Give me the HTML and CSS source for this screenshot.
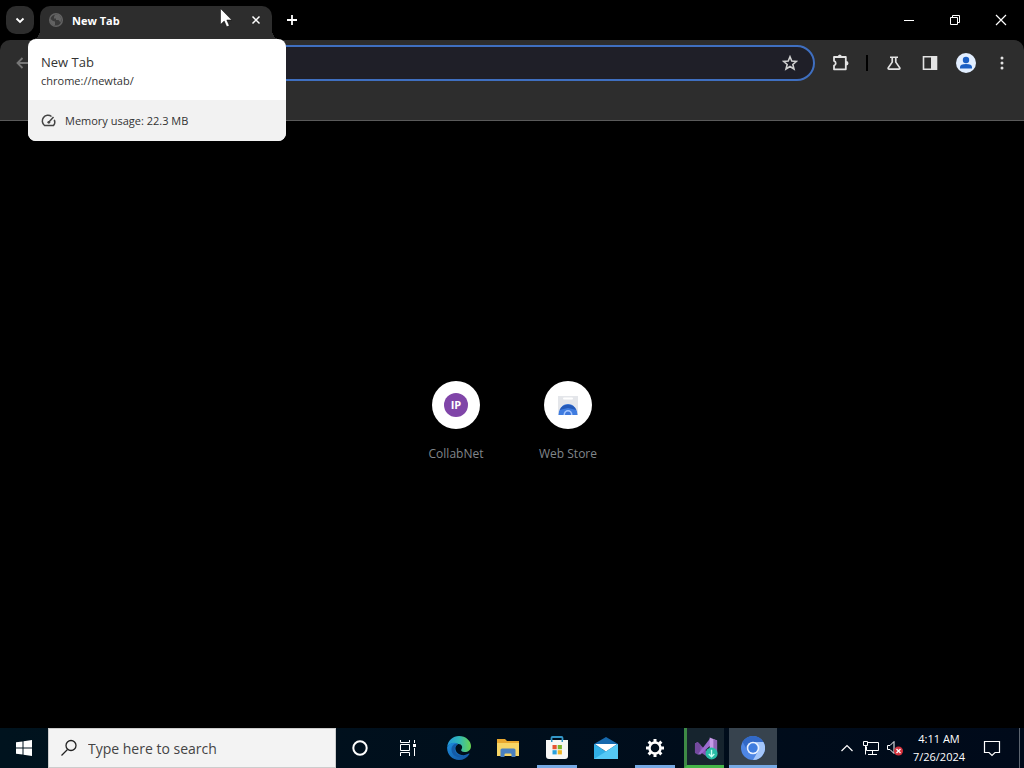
FILE: index.html
```html
<!DOCTYPE html>
<html lang="en">
<head>
    <meta charset="UTF-8">
    <meta name="viewport" content="width=device-width, initial-scale=1.0">
    <title>New Tab</title>
    <link rel="stylesheet" href="styles.css">
</head>
<body>
<!-- Tab strip -->
<header class="tab-strip">
    <button class="tab-search" aria-label="Search tabs">
        <svg width="16" height="16" viewBox="0 0 16 16"><path d="M4.500 6.500 8 10l3.500-3.500" fill="none" stroke="#fff" stroke-width="1.800"/></svg>
    </button>
    <div class="tab">
        <svg width="16" height="16" viewBox="0 0 16 16">
            <circle cx="8" cy="8" r="6.300" fill="#3a3a3a" stroke="#626262" stroke-width="1.500"/>
            <path d="M2 6.500 5 9l2 .5V13l-1.500.5Q2 11.500 2 6.500zM7 2.500l4 .5 2.500 3.500-1 4-2-2.500H8V6.500H6V5z" fill="#626262"/>
        </svg>
        <span class="tab-title">New Tab</span>
        <button class="tab-close" aria-label="Close tab">
            <svg width="16" height="16" viewBox="0 0 16 16"><path d="M4.500 4.500l7 7M11.500 4.500l-7 7" stroke="#fff" stroke-width="1.500"/></svg>
        </button>
    </div>
    <button class="new-tab" aria-label="New tab">
        <svg width="16" height="16" viewBox="0 0 16 16"><path d="M8 3v10M3 8h10" stroke="#fff" stroke-width="1.800"/></svg>
    </button>
    <div class="window-controls">
        <button aria-label="Minimize"><svg width="12" height="12" viewBox="0 0 12 12"><path d="M1 6.500h10" stroke="#fff"/></svg></button>
        <button aria-label="Restore"><svg width="12" height="12" viewBox="0 0 12 12"><path d="M1.500 3.500h7v7h-7zM3.500 3.500v-2h7v7h-2" fill="none" stroke="#fff"/></svg></button>
        <button aria-label="Close"><svg width="12" height="12" viewBox="0 0 12 12"><path d="M1 1l10 10M11 1 1 11" stroke="#fff" stroke-width="1.200"/></svg></button>
    </div>
</header>

<!-- Toolbar and bookmarks bar -->
<div class="toolbar">
    <div class="toolbar-row">
        <button class="tool" aria-label="Back">
            <svg width="16" height="16" viewBox="0 0 16 16"><path d="M14 8H4M8.500 3l-5 5 5 5" fill="none" stroke="#777" stroke-width="1.800"/></svg>
        </button>
        <button class="tool" aria-label="Forward">
            <svg width="16" height="16" viewBox="0 0 16 16"><path d="M2 8h10M7.500 3l5 5-5 5" fill="none" stroke="#777" stroke-width="1.800"/></svg>
        </button>
        <button class="tool" aria-label="Reload">
            <svg width="16" height="16" viewBox="0 0 16 16"><path d="M13 8a5 5 0 1 1-1.500-3.500M13 2v4H9" fill="none" stroke="#ddd" stroke-width="1.600"/></svg>
        </button>
        <div class="address-bar">
            <input type="text" aria-label="Address and search bar">
            <button class="star" aria-label="Bookmark this tab">
                <svg width="16" height="16" viewBox="0 0 18 18"><path d="M9 2l2 4.800 5.200.4-4 3.400 1.300 5.100L9 13l-4.500 2.700 1.300-5.100-4-3.400L7 6.800z" fill="none" stroke="#d0d0d0" stroke-width="1.800"/></svg>
            </button>
        </div>
        <button class="tool" aria-label="Extensions">
            <svg width="20" height="20" viewBox="0 0 20 20"><path d="M4 4h11.800v12.300H4v-3.600c2.300-.6 2.300-4.200 0-4.800z" fill="none" stroke="#e3e3e3" stroke-width="1.800" stroke-linejoin="round"/><path d="M7.800 4a2 2.500 0 0 1 4 0zM16 8a2.500 2.200 0 0 1 0 4.400z" fill="#e3e3e3"/></svg>
        </button>
        <span class="divider"></span>
        <button class="tool" aria-label="Experiments">
            <svg width="16" height="16" viewBox="0 0 18 18"><path d="M4.500 2.500h9M7 3v5L2.500 14.500q-.5 1.300 1 1.300h11q1.500 0 1-1.300L11 8V3" fill="none" stroke="#e3e3e3" stroke-width="1.900"/></svg>
        </button>
        <button class="tool" aria-label="Side panel">
            <svg width="16" height="16" viewBox="0 0 16 16"><path d="M1.500 1.800h13v12.400h-13z" fill="none" stroke="#e3e3e3" stroke-width="1.600"/><path d="M9 1.500h5.500v13H9z" fill="#e3e3e3"/></svg>
        </button>
        <button class="tool" aria-label="Profile">
            <svg width="20" height="20" viewBox="0 0 20 20"><circle cx="10" cy="10" r="10" fill="#e2eeff"/><circle cx="10" cy="7" r="3.200" fill="#1b5fc4"/><path d="M4 15.500V14q0-3 6-3t6 3v1.500z" fill="#1b5fc4"/></svg>
        </button>
        <button class="tool" aria-label="Menu">
            <svg width="16" height="16" viewBox="0 0 16 16" fill="#e3e3e3"><circle cx="8" cy="3" r="1.500"/><circle cx="8" cy="8" r="1.500"/><circle cx="8" cy="13" r="1.500"/></svg>
        </button>
    </div>
    <div class="bookmarks-bar"></div>
</div>

<!-- New tab page -->
<main class="page">
    <a class="shortcut" href="#">
        <span class="shortcut-icon"><span class="badge-ip">IP</span></span>
        <span>CollabNet</span>
    </a>
    <a class="shortcut" href="#">
        <span class="shortcut-icon">
            <svg width="24" height="24" viewBox="0 0 24 24">
                <path d="M2 3h20v19H2z" fill="#e4e6ea"/>
                <path d="M8 5.500h8" stroke="#fff" stroke-width="2" stroke-linecap="round"/>
                <path d="M2.500 22a9.500 11 0 0 1 19 0z" fill="#3f7ce0"/>
                <path d="M3.500 17A9.500 9.500 0 0 1 20.500 17L12 15z" fill="#2459b8"/>
                <path d="M7.500 22a4.500 5 0 0 1 9 0z" fill="#a8c8ff"/>
                <path d="M9 22a3 3.500 0 0 1 6 0z" fill="#3e78dc"/>
            </svg>
        </span>
        <span>Web Store</span>
    </a>
</main>

<!-- Windows taskbar -->
<footer class="taskbar">
    <button class="task" aria-label="Start">
        <svg width="16" height="16" viewBox="0 0 16 16" fill="#fff"><path d="M0 2.300 6.500 1.400V7.500H0zM7.500 1.200 16 0v7.500H7.500zM0 8.500h6.500v6.100L0 13.700zM7.500 8.500H16V16l-8.500-1.200z"/></svg>
    </button>
    <label class="search">
        <svg width="18" height="18" viewBox="0 0 18 18"><circle cx="11" cy="6.500" r="5" fill="none" stroke="#222" stroke-width="1.300"/><path d="M7.500 10.500 1.500 16.500" stroke="#222" stroke-width="1.300"/></svg>
        <input type="text" placeholder="Type here to search" aria-label="Type here to search">
    </label>
    <button class="task" aria-label="Cortana">
        <svg width="16" height="16" viewBox="0 0 16 16"><circle cx="8" cy="8" r="6.700" fill="none" stroke="#fff" stroke-width="2"/></svg>
    </button>
    <button class="task" aria-label="Task view">
        <svg width="18" height="18" viewBox="0 0 18 18" fill="none" stroke="#fff"><path d="M1.500 1v2.500h9V1M1.500 5.500h9v6h-9zM1.500 17v-3.500h9V17M15.500 1v3M15.500 9v8"/><path d="M14 5h3v3h-3z" fill="#fff" stroke="none"/></svg>
    </button>
    <nav class="apps">
        <button class="task" aria-label="Microsoft Edge">
            <svg width="24" height="24" viewBox="0 0 24 24">
                <defs>
                    <linearGradient id="edge-top" x1="0" x2="1"><stop offset="0" stop-color="#2498dc"/><stop offset=".5" stop-color="#30b8b8"/><stop offset="1" stop-color="#69d450"/></linearGradient>
                    <linearGradient id="edge-low" x1="0" y1="0" x2="1" y2="1"><stop offset="0" stop-color="#1d8fdf"/><stop offset="1" stop-color="#12509c"/></linearGradient>
                </defs>
                <path d="M.2 11C1 4 6 0 12 0c7 0 12 5 12 10 0 4-3 6-6.300 6-3.200 0-4.200-1.400-3.200-2.700 1.500-2 .5-5.300-3-5.300C7 6.500 2 7 .2 11z" fill="url(#edge-top)"/>
                <path d="M.2 11C2 6.500 8 5.500 11 8.200 6.500 10 8 18 14.500 19c3 .5 5.500-.4 7.300-1.400.5-.2.800.2.500.6C20 22 16.500 24 12 24 5 24-.5 18 .2 11z" fill="url(#edge-low)"/>
                <path d="M11 8.200C8 9.500 7 13 8.500 16c1.500 3 5 4.500 9 3.800C12 23.500 4.500 20 4.500 13.500 4.500 9 8.500 7 11 8.200z" fill="#145ba8"/>
            </svg>
        </button>
        <button class="task" aria-label="File Explorer">
            <svg width="22" height="20" viewBox="0 0 22 20"><path d="M0 1h8l2 2h12v15H0z" fill="#e9a82f"/><path d="M0 5h22v13H0z" fill="#f7d566"/><path d="M3.500 19v-7q0-1.500 1.500-1.500h12q1.500 0 1.500 1.500v7h-4v-2.500q0-1-1-1h-5q-1 0-1 1V19z" fill="#4a80c0"/></svg>
        </button>
        <button class="task running" aria-label="Microsoft Store">
            <svg width="24" height="24" viewBox="0 0 24 24"><path d="M6.500 6V2q0-1 1-1h9q1 0 1 1v4" fill="none" stroke="#3397c8" stroke-width="1.800"/><path d="M1 4h22v16q0 3-3 3H4q-3 0-3-3z" fill="#f7f7f5"/><path d="M6 4h1.500v2H6zM16.500 4H18v2h-1.500z" fill="#3397c8"/><path d="M7.500 9h4.200v4.200H7.500z" fill="#e65332"/><path d="M12.700 9h4.200v4.200h-4.200z" fill="#7cb52b"/><path d="M7.500 14.200h4.200v4.200H7.500z" fill="#27a0dd"/><path d="M12.700 14.200h4.200v4.200h-4.200z" fill="#f0b323"/></svg>
        </button>
        <button class="task" aria-label="Mail">
            <svg width="24" height="24" viewBox="0 0 24 24"><path d="M0 8 12 1l12 7v5H0z" fill="#1669ad"/><path d="M0 8l12 7.500L24 8v15H0z" fill="#31afe6"/><path d="M1 8h22l-11 7.500z" fill="#fff"/><path d="M0 23 24 8v15z" fill="#55c9f5"/></svg>
        </button>
        <button class="task running" aria-label="Settings">
            <svg width="20" height="20" viewBox="0 0 20 20" fill="none" stroke="#fff"><circle cx="10" cy="10" r="5.500" stroke-width="2.500"/><path d="M10 1v3M10 16v3M1 10h3M16 10h3M3.600 3.600l2.200 2.200M14.200 14.200l2.200 2.200M16.400 3.600l-2.200 2.200M5.800 14.200l-2.200 2.200" stroke-width="3"/></svg>
        </button>
        <button class="task running installer" aria-label="Visual Studio Installer">
            <svg width="24" height="24" viewBox="0 0 26 26"><path d="M1 8l3-1.500L18 21l-3 2L2 14z" fill="#8652b4"/><path d="M1 8l3-1.500 3 3v8L4 20l-3-1.500z" fill="#744a9e"/><path d="M4 20 18 2v8L7 20z" fill="#9b6bd0"/><path d="M17 1.500 25 5v16l-8 3z" fill="#c69be8"/><path d="M21 3.200 25 5v16l-4 1.500z" fill="#9065b8"/><circle cx="19" cy="19" r="6.500" fill="#28bda6"/><path d="M19 15v7M16 19.500l3 3 3-3" fill="none" stroke="#c8fff2" stroke-width="1.500"/></svg>
        </button>
        <button class="task running active" aria-label="Chromium">
            <svg width="24" height="24" viewBox="0 0 24 24"><circle cx="12" cy="12" r="12" fill="#4e86e4"/><path d="M1.600 6A12 12 0 0 1 22.400 6H12L6.800 15z" fill="#3269c7"/><path d="M22.400 6A12 12 0 0 1 12 24l5.200-9L12 6z" fill="#a4c6fa"/><circle cx="12" cy="12" r="6.300" fill="#e8f1ff"/><circle cx="12" cy="12" r="4.700" fill="#3e7cdf"/></svg>
        </button>
    </nav>
    <div class="tray">
        <button aria-label="Show hidden icons"><svg width="14" height="14" viewBox="0 0 14 14"><path d="M1.500 10 7 4.500 12.500 10" fill="none" stroke="#fff" stroke-width="1.200"/></svg></button>
        <button aria-label="Network"><svg width="18" height="16" viewBox="0 0 18 16" fill="none" stroke="#fff"><path d="M5.500 2.500h11v8h-12v-4M10.500 11v3M6 14.500h9M1.500 1.500h4v4h-4zM3.500 6v8.500"/></svg></button>
        <button aria-label="Volume muted"><svg width="18" height="18" viewBox="0 0 18 18"><path d="M1.500 6.500H4l4-4v12l-4-4H1.500z" fill="none" stroke="#fff"/><circle cx="12.500" cy="12" r="4.500" fill="#d6323d"/><path d="M10.500 10l4 4M14.500 10l-4 4" stroke="#fff" stroke-width="1.300"/></svg></button>
        <button class="clock"><span>4:11 AM</span><span>7/26/2024</span></button>
        <button class="notifications" aria-label="Notifications"><svg width="18" height="18" viewBox="0 0 18 18"><path d="M1.500 2.500h15v11H12l-3 3-3-3H1.500z" fill="none" stroke="#fff" stroke-width="1.200"/></svg></button>
        <span class="show-desktop"></span>
    </div>
</footer>

<!-- Tab hover card -->
<div class="hover-card" role="tooltip">
    <div class="card-top">
        <div class="card-title">New Tab</div>
        <div class="card-url">chrome://newtab/</div>
    </div>
    <div class="card-memory">
        <svg width="16" height="16" viewBox="0 0 16 16"><path d="M10.500 3.500A5.500 5.500 0 0 0 3.500 12.500h9A5.500 5.500 0 0 0 13.300 6.800M7.500 9.500l5-5.500" fill="none" stroke="#444" stroke-width="1.500"/><circle cx="7.800" cy="9.300" r="1.400" fill="#444"/></svg>
        <span>Memory usage: 22.3 MB</span>
    </div>
</div>

<!-- Mouse pointer -->
<svg class="cursor" width="12" height="20" viewBox="0 0 12 20"><path d="M.5.500v16l3.700-3.500 2.500 5.800 2.600-1.100-2.500-5.700h5z" fill="#fff" stroke="#000" stroke-width=".5"/></svg>
</body>
</html>
```
FILE: styles.css
```css
* {
    box-sizing: border-box;
}

body {
    margin: 0;
    height: 100vh;
    display: flex;
    flex-direction: column;
    overflow: hidden;
    background-color: #000;
    color: #fff;
    font-family: "Open Sans", "Noto Sans", sans-serif;
    font-size: 12px;
}

button {
    display: flex;
    align-items: center;
    justify-content: center;
    padding: 0;
    border: none;
    background: none;
    color: inherit;
    font: inherit;
}

svg {
    display: block;
    flex-shrink: 0;
}

/* Tab strip */
.tab-strip {
    display: flex;
    height: 40px;
    padding-left: 6px;
}

.tab-search {
    width: 28px;
    height: 28px;
    margin: 6px 6px 0 0;
    border-radius: 10px;
    background-color: #2d2d2d;
}

.tab {
    position: relative;
    display: flex;
    align-items: center;
    gap: 8px;
    width: 232px;
    margin-top: 6px;
    padding: 0 8px 6px;
    border-radius: 10px 10px 0 0;
    background-color: #2d2d2d;
}

/* curved feet of the tab */
.tab::before,
.tab::after {
    content: "";
    position: absolute;
    bottom: 0;
    width: 10px;
    height: 10px;
}

.tab::before {
    right: 100%;
    background: radial-gradient(circle at 0 0, transparent 10px, #2d2d2d 10px);
}

.tab::after {
    left: 100%;
    background: radial-gradient(circle at 100% 0, transparent 10px, #2d2d2d 10px);
}

.tab-title {
    flex: 1;
    font-size: 11px;
    font-weight: bold;
}

.new-tab {
    width: 28px;
    height: 28px;
    margin: 6px 0 0 6px;
}

.window-controls {
    display: flex;
    margin-left: auto;
}

.window-controls button {
    width: 46px;
}

/* Toolbar */
.toolbar {
    border-bottom: 1px solid #5a5a5a;
    border-radius: 10px 10px 0 0;
    background-color: #2d2d2d;
}

.toolbar-row {
    display: flex;
    align-items: center;
    height: 46px;
    padding: 0 4px;
}

.tool {
    width: 36px;
    height: 36px;
}

.address-bar {
    flex: 1;
    display: flex;
    align-items: center;
    height: 36px;
    margin-right: 7px;
    padding: 0 15px;
    border: 2px solid #3f6fc0;
    border-radius: 18px;
    background-color: #1f1f28;
}

.address-bar input {
    flex: 1;
    border: none;
    outline: none;
    background: none;
    color: #fff;
}

.divider {
    width: 2px;
    height: 16px;
    margin: 0 8px;
    background-color: #000;
}

.bookmarks-bar {
    height: 34px;
}

/* New tab page */
.page {
    flex: 1;
    display: flex;
    align-items: center;
    justify-content: center;
    padding-bottom: 6px;
}

.shortcut {
    display: flex;
    flex-direction: column;
    align-items: center;
    gap: 16px;
    width: 112px;
    color: #80868b;
    line-height: 18px;
    text-decoration: none;
}

.shortcut-icon {
    display: flex;
    align-items: center;
    justify-content: center;
    width: 48px;
    height: 48px;
    border-radius: 50%;
    background-color: #fff;
}

.badge-ip {
    width: 24px;
    height: 24px;
    border-radius: 50%;
    background-color: #8045a8;
    color: #fff;
    font-size: 11px;
    font-weight: bold;
    line-height: 24px;
    text-align: center;
}

/* Taskbar */
.taskbar {
    display: flex;
    height: 40px;
    background: linear-gradient(to right, #00131e, #000a1a);
}

.task {
    width: 48px;
    height: 40px;
}

.search {
    display: flex;
    align-items: center;
    gap: 10px;
    width: 288px;
    padding: 0 11px;
    border: 1px solid #ccc;
    background-color: #f3f3f3;
}

.search input {
    flex: 1;
    min-width: 0;
    padding: 0;
    border: none;
    outline: none;
    background: none;
    font: 14px "Open Sans", sans-serif;
}

.search input::placeholder {
    color: #444;
    opacity: 1;
}

.apps {
    display: flex;
    gap: 1px;
    padding-left: 3px;
}

.running {
    width: 40px;
    margin: 0 4px;
    padding-top: 3px;
    border-bottom: 3px solid #76a9e4;
}

.installer {
    border-left: 3px solid #3e8a45;
    border-bottom-color: #45b548;
    background-color: #16242e;
}

.active {
    width: 48px;
    margin: 0;
    background-color: #37434e;
}

/* System tray */
.tray {
    display: flex;
    margin-left: auto;
}

.tray button {
    width: 24px;
}

.tray .clock {
    flex-direction: column;
    width: 64px;
    font-size: 11px;
    line-height: 18px;
}

.tray .notifications {
    width: 42px;
}

.show-desktop {
    width: 5px;
    margin-left: 6px;
    border-left: 1px solid #5d6570;
}

/* Tab hover card */
.hover-card {
    position: absolute;
    top: 39px;
    left: 28px;
    width: 258px;
    overflow: hidden;
    border-radius: 8px;
    background-color: #fff;
    color: #333;
    font-size: 11px;
}

.card-top {
    padding: 14px 13px 10px;
}

.card-title {
    font-size: 13px;
    line-height: 18px;
}

.card-url {
    line-height: 19px;
}

.card-memory {
    display: flex;
    align-items: center;
    gap: 8px;
    height: 41px;
    padding: 0 13px;
    background-color: #f2f2f2;
}

.cursor {
    position: absolute;
    top: 8px;
    left: 220px;
}
```
